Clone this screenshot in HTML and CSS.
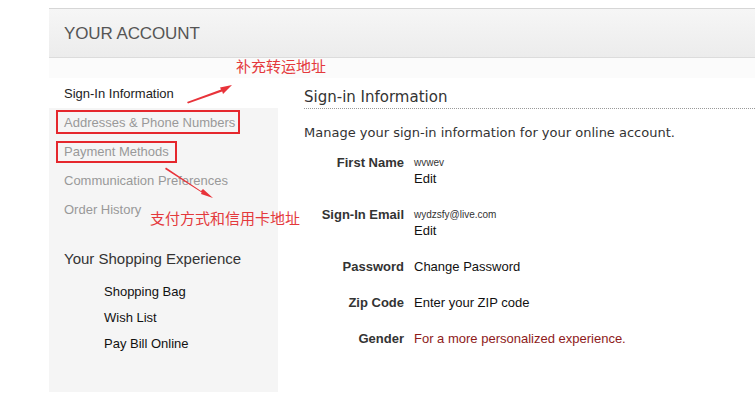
FILE: index.html
```html
<!DOCTYPE html>
<html lang="en">
<head>
<meta charset="utf-8">
<title>Your Account</title>
<link rel="stylesheet" href="styles.css">
</head>
<body>
<div class="page">
  <div class="header"><h1 class="title">YOUR ACCOUNT</h1></div>
  <div class="strip"></div>
  <div class="body">
    <aside class="sidebar">
      <ul class="nav">
        <li class="nav-item active">Sign-In Information</li>
        <li class="nav-item">Addresses &amp; Phone Numbers</li>
        <li class="nav-item">Payment Methods</li>
        <li class="nav-item">Communication Preferences</li>
        <li class="nav-item">Order History</li>
      </ul>
      <h2 class="side-title">Your Shopping Experience</h2>
      <ul class="shop">
        <li>Shopping Bag</li>
        <li>Wish List</li>
        <li>Pay Bill Online</li>
      </ul>
    </aside>
    <main class="main">
      <h2 class="main-title">Sign-in Information</h2>
      <p class="desc">Manage your sign-in information for your online account.</p>
      <div class="row">
        <div class="label">First Name</div>
        <div class="value"><span class="small">wvwev</span><span class="link">Edit</span></div>
      </div>
      <div class="row">
        <div class="label">Sign-In Email</div>
        <div class="value"><span class="small">wydzsfy@live.com</span><span class="link">Edit</span></div>
      </div>
      <div class="row">
        <div class="label">Password</div>
        <div class="value">Change Password</div>
      </div>
      <div class="row">
        <div class="label">Zip Code</div>
        <div class="value">Enter your ZIP code</div>
      </div>
      <div class="row">
        <div class="label">Gender</div>
        <div class="value red">For a more personalized experience.</div>
      </div>
    </main>
  </div>

  <div class="mark mark-addr"></div>
  <div class="mark mark-pay"></div>
  <div class="note note-1">补充转运地址</div>
  <div class="note note-2">支付方式和信用卡地址</div>
  <svg class="arrows" width="706" height="399" viewBox="0 0 706 399">
    <g fill="#e8333a">
      <polygon points="138,94 172,81.5 171,79.5 183,77 174,86 173.2,83.5 139,95.5"/>
      <polygon points="117,159.5 152,183 154,181 164,190 152,186 152.7,184.5 116,161"/>
    </g>
  </svg>
</div>
</body>
</html>
```
FILE: styles.css
```css
html, body {
  margin: 0;
  padding: 0;
  background: #fff;
  overflow: hidden;
}
body {
  padding: 8px 0 0 49px;
  font-family: "Liberation Sans", Arial, sans-serif;
}
ul { list-style: none; margin: 0; padding: 0; }
h1, h2, p { margin: 0; font-weight: normal; }

.page {
  position: relative;
  width: 720px;
}

.header {
  box-sizing: border-box;
  height: 50px;
  border-top: 1px solid #d6d6d6;
  border-bottom: 1px solid #dcdcdc;
  background: linear-gradient(#f6f6f6, #ececec);
  box-shadow: 0 1px 0 #f2f2f2;
  display: flex;
  align-items: center;
  padding: 2px 0 0 15px;
}
.title {
  font-size: 17px;
  color: #555;
  letter-spacing: -0.1px;
}

.strip {
  height: 20px;
  background: #fbfbfb;
}

.body {
  display: flex;
  height: 314px;
}

.sidebar {
  width: 229px;
  flex: none;
  background: #f5f5f5;
}
.nav-item {
  height: 29px;
  line-height: 30px;
  padding-left: 15px;
  font-size: 13px;
  color: #999;
}
.nav-item.active {
  height: 30px;
  line-height: 31px;
  background: #fff;
  color: #222;
}
.side-title {
  margin-top: 25px;
  padding-left: 15px;
  font-size: 15px;
  line-height: 20px;
  color: #333;
}
.shop {
  margin-top: 10px;
  padding-left: 55px;
}
.shop li {
  font-size: 13px;
  line-height: 26px;
  color: #111;
}

.main {
  flex: 1;
  background: #fff;
  padding-left: 26px;
}
.main-title {
  font-family: "DejaVu Sans", Verdana, sans-serif;
  font-size: 15px;
  line-height: 20px;
  color: #333;
  padding-top: 9px;
  padding-bottom: 1px;
  border-bottom: 1px dotted #999;
}
.desc {
  font-family: "DejaVu Sans", Verdana, sans-serif;
  font-size: 13px;
  line-height: 18px;
  color: #333;
  margin-top: 15px;
  margin-bottom: 13px;
}
.row {
  display: flex;
  align-items: flex-start;
  gap: 10px;
  margin-bottom: 20px;
  line-height: 16px;
  font-size: 13px;
}
.label {
  width: 100px;
  text-align: right;
  font-weight: bold;
  color: #333;
}
.value { color: #111; }
.value .small {
  display: block;
  font-size: 10px;
  color: #333;
}
.value .link { display: block; }
.value.red { color: #8e1a1a; }

.mark {
  position: absolute;
  border: 2px solid #e5272d;
}
.mark-addr { left: 7px; top: 102px; width: 180px; height: 20px; }
.mark-pay { left: 7px; top: 133px; width: 117px; height: 18px; }

.note {
  position: absolute;
  font-family: "Noto Sans CJK SC", sans-serif;
  font-size: 15px;
  line-height: 20px;
  color: #e4393c;
  white-space: nowrap;
}
.note-1 { left: 187px; top: 48px; }
.note-2 { left: 101px; top: 200px; }

.arrows {
  position: absolute;
  left: 0;
  top: 0;
}
```
